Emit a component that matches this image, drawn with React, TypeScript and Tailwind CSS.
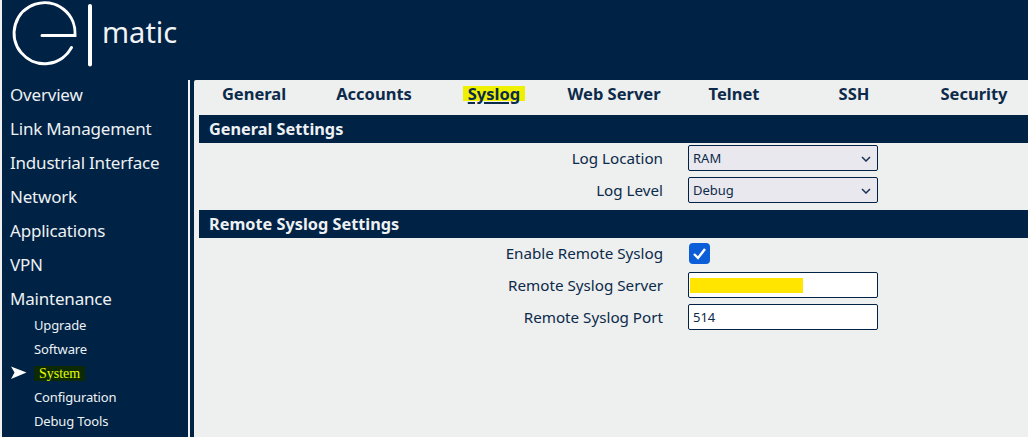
const mainNav = ["Overview", "Link Management", "Industrial Interface", "Network", "Applications", "VPN", "Maintenance"];
const tabs = ["General", "Accounts", "Syslog", "Web Server", "Telnet", "SSH", "Security"];

function Logo() {
  return (
    <div className="flex h-20 items-start">
      <svg width="96" height="72" viewBox="2 0 96 72" className="shrink-0">
        <path
          d="M42 35.5 H75 A30.5 30.5 0 1 0 71.5 47.5"
          fill="none"
          stroke="#fff"
          strokeWidth="3"
          strokeLinecap="round"
        />
        <path d="M90 6 V64.5" fill="none" stroke="#fff" strokeWidth="4" strokeLinecap="round" />
      </svg>
      <span className="ml-[4px] mt-[13px] text-[29px] leading-[38px] font-normal text-[#f1f3f5]">matic</span>
    </div>
  );
}

function SubItem({ label }: { label: string }) {
  return <li className="flex h-[24px] items-center pl-[32px]">{label}</li>;
}

function Sidebar() {
  return (
    <nav className="-mt-[2px] w-[186px] shrink-0 text-[#edf1f4]">
      {mainNav.map((item) => (
        <div key={item} className="flex h-[34px] items-center pl-[8px] text-[17px] tracking-[-0.2px]">
          {item}
        </div>
      ))}
      <ul className="-mt-[2px] text-[13px] tracking-[-0.15px]">
        <SubItem label="Upgrade" />
        <SubItem label="Software" />
        <li className="flex h-[24px] items-center">
          <svg width="16" height="14" viewBox="0 0 16 14" className="mb-[2px] ml-[9px] shrink-0">
            <path d="M0 0.5 L15.5 6.5 L0 13 L3.5 6.5 Z" fill="#fff" />
          </svg>
          <span className="mb-[1px] ml-[7px] bg-[#0e2a04] px-[5px] font-['Liberation_Serif',serif] text-[14px] leading-[15px] tracking-normal text-[#e4ff00]">
            System
          </span>
        </li>
        <SubItem label="Configuration" />
        <SubItem label="Debug Tools" />
      </ul>
    </nav>
  );
}

function SectionBar({ title }: { title: string }) {
  return (
    <div className="ml-[5px] flex h-[28px] items-center bg-[#002244] pl-[10px] pt-[1px] text-[16.3px] font-bold text-[#eef1f3]">
      {title}
    </div>
  );
}

function Row({ label, short, children }: { label: string; short?: boolean; children: React.ReactNode }) {
  return (
    <div className={short ? "flex h-[31px] items-center" : "flex h-[32px] items-center"}>
      <label className="w-[469px] shrink-0 text-right text-[15.2px] text-[#0c2a4a]">{label}</label>
      <div className="ml-[25px] flex items-center">{children}</div>
    </div>
  );
}

function FakeSelect({ value }: { value: string }) {
  return (
    <div className="flex h-[26px] w-[190px] items-center justify-between rounded-[2px] border border-[#002244] bg-[#e9e8ee] pl-[4px] pr-[6px] pt-[1px] text-[13px] text-[#0c2a4a]">
      <span>{value}</span>
      <svg width="10" height="6" viewBox="0 0 10 6">
        <path d="M1 1 L5 5 L9 1" fill="none" stroke="#1c3350" strokeWidth="1.5" />
      </svg>
    </div>
  );
}

export default function App() {
  return (
    <div className="h-[437px] w-[1028px] overflow-hidden border-l-2 border-[#eef0f1] bg-[#002244] font-['Noto_Sans','Open_Sans',sans-serif]">
      <Logo />
      <div className="flex">
        <Sidebar />
        <div className="h-[357px] w-[2px] shrink-0 bg-[#f2f4f5]" />
        <div className="w-[4px] shrink-0" />
        <main className="h-[357px] min-w-0 flex-1 overflow-hidden rounded-tl-[2px] bg-[#eeefef]">
          <div className="grid h-[35px] w-[840px] grid-cols-7 items-center pb-[7px] text-[16.5px] font-bold text-[#0c2a4a]">
            {tabs.map((tab) => (
              <div key={tab} className="text-center">
                {tab === "Syslog" ? (
                  <span className="inline-block bg-[#eef000] px-[5px] leading-[15px] underline decoration-2 underline-offset-[2px]">
                    {tab}
                  </span>
                ) : (
                  tab
                )}
              </div>
            ))}
          </div>
          <SectionBar title="General Settings" />
          <div className="-mt-[1px] pb-[4px]">
            <Row label="Log Location">
              <FakeSelect value="RAM" />
            </Row>
            <Row label="Log Level">
              <FakeSelect value="Debug" />
            </Row>
          </div>
          <SectionBar title="Remote Syslog Settings" />
          <div>
            <Row label="Enable Remote Syslog" short>
              <div className="ml-[1px] flex h-[21px] w-[21px] items-center justify-center rounded-[4px] bg-[#0b5ed7]">
                <svg width="15" height="13" viewBox="0 0 15 13">
                  <path d="M2 7 L6 11 L13 2" fill="none" stroke="#fff" strokeWidth="2.4" />
                </svg>
              </div>
            </Row>
            <Row label="Remote Syslog Server">
              <div className="flex h-[26px] w-[190px] items-center rounded-[2px] border border-[#002244] bg-white pl-[1px]">
                <div className="h-[15px] w-[113px] bg-[#ffe500]" />
              </div>
            </Row>
            <Row label="Remote Syslog Port">
              <div className="flex h-[26px] w-[190px] items-center rounded-[2px] border border-[#002244] bg-white pl-[4px] pt-[1px] text-[13px] text-[#0c2a4a]">
                514
              </div>
            </Row>
          </div>
        </main>
      </div>
    </div>
  );
}
